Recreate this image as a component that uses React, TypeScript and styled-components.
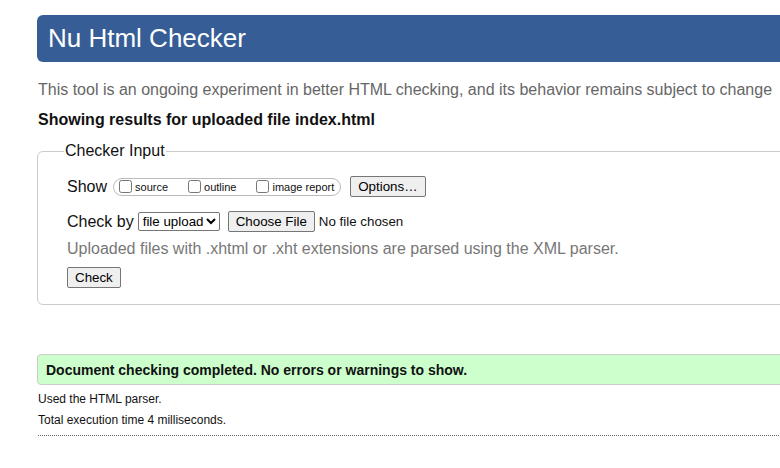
import React from "react";
import styled, { createGlobalStyle } from "styled-components";

const GlobalStyle = createGlobalStyle`
  html, body {
    margin: 0;
    padding: 0;
    overflow: hidden;
    background: #fff;
  }
  body {
    font-family: "Liberation Sans", Arial, sans-serif;
    color: #111;
  }
`;

const Page = styled.div`
  width: 1100px;
  padding: 15px 0 0 37px;
`;

const Banner = styled.h1`
  margin: 0;
  height: 47px;
  display: flex;
  align-items: center;
  padding-left: 11px;
  background: #365d95;
  color: #fff;
  font-size: 26px;
  font-weight: normal;
  border-radius: 6px;
`;

const Intro = styled.p`
  margin: 19px 0 0 1px;
  font-size: 16px;
  color: #666;
`;

const Heading = styled.h2`
  margin: 12px 0 0 1px;
  font-size: 16px;
  font-weight: bold;
`;

const Fieldset = styled.fieldset`
  margin: 13px 0 0 0;
  padding: 16px 29px 16px 29px;
  border: 1px solid #ccc;
  border-radius: 6px;
`;

const Legend = styled.legend`
  font-size: 16px;
  padding: 0 1px;
  margin-left: -3px;
`;

const Row = styled.div<{ $mb?: number }>`
  display: flex;
  align-items: center;
  gap: 6px;
  font-size: 16px;
  margin-bottom: ${(p) => p.$mb ?? 0}px;
`;

const CheckByLabel = styled.span`
  margin-right: -2px;
`;

const OptionGroup = styled.span`
  display: inline-flex;
  align-items: center;
  height: 16px;
  padding: 0 6px 0 5px;
  border: 1px solid #bbb;
  border-radius: 9px;
  gap: 20px;
  margin-right: 3px;
`;

const OptionLabel = styled.label`
  display: inline-flex;
  align-items: center;
  font-size: 11px;
  input {
    margin: 0 3px 0 0;
    width: 13px;
    height: 13px;
  }
`;

const Btn = styled.button<{ $ml?: number }>`
  font-family: "Liberation Sans", Arial, sans-serif;
  font-size: 13.33px;
  color: #000;
  background: #efefef;
  border: 1px solid #767676;
  border-radius: 2px;
  padding: 1px 7px;
  height: 21px;
  margin-left: ${(p) => p.$ml ?? 0}px;
`;

const Select = styled.select`
  font-family: "Liberation Sans", Arial, sans-serif;
  font-size: 13.33px;
  width: 82px;
  height: 19px;
  border: 1px solid #767676;
  border-radius: 2px;
  padding: 0;
  background: #fff;
  color: #000;
`;

const FileNote = styled.span`
  font-size: 13.33px;
  margin-left: -2px;
`;

const Hint = styled.p`
  margin: 8px 0 9px;
  font-size: 16px;
  color: #777;
`;

const Success = styled.div`
  margin-top: 49px;
  height: 29px;
  display: flex;
  align-items: center;
  padding-left: 8px;
  background: #ccffcc;
  border: 1px solid #ccc;
  border-radius: 4px;
  font-size: 14px;
  font-weight: bold;
`;

const Small = styled.p<{ $mt: number }>`
  margin: ${(p) => p.$mt}px 0 0 1px;
  font-size: 12px;
`;

const Rule = styled.hr`
  margin: 8px 0 0 1px;
  border: 0;
  border-top: 1px dotted #666;
`;

export default function App() {
  return (
    <>
      <GlobalStyle />
      <Page>
        <Banner>Nu Html Checker</Banner>
        <Intro>
          This tool is an ongoing experiment in better HTML checking, and its
          behavior remains subject to change
        </Intro>
        <Heading>Showing results for uploaded file index.html</Heading>
        <Fieldset>
          <Legend>Checker Input</Legend>
          <Row $mb={14}>
            <span>Show</span>
            <OptionGroup>
              <OptionLabel>
                <input type="checkbox" />
                source
              </OptionLabel>
              <OptionLabel>
                <input type="checkbox" />
                outline
              </OptionLabel>
              <OptionLabel>
                <input type="checkbox" />
                image report
              </OptionLabel>
            </OptionGroup>
            <Btn>Options…</Btn>
          </Row>
          <Row>
            <CheckByLabel>Check by</CheckByLabel>
            <Select defaultValue="file">
              <option value="file">file upload</option>
            </Select>
            <Btn $ml={2}>Choose File</Btn>
            <FileNote>No file chosen</FileNote>
          </Row>
          <Hint>
            Uploaded files with .xhtml or .xht extensions are parsed using the
            XML parser.
          </Hint>
          <Btn>Check</Btn>
        </Fieldset>
        <Success>
          Document checking completed. No errors or warnings to show.
        </Success>
        <Small $mt={7}>Used the HTML parser.</Small>
        <Small $mt={7}>Total execution time 4 milliseconds.</Small>
        <Rule />
      </Page>
    </>
  );
}
